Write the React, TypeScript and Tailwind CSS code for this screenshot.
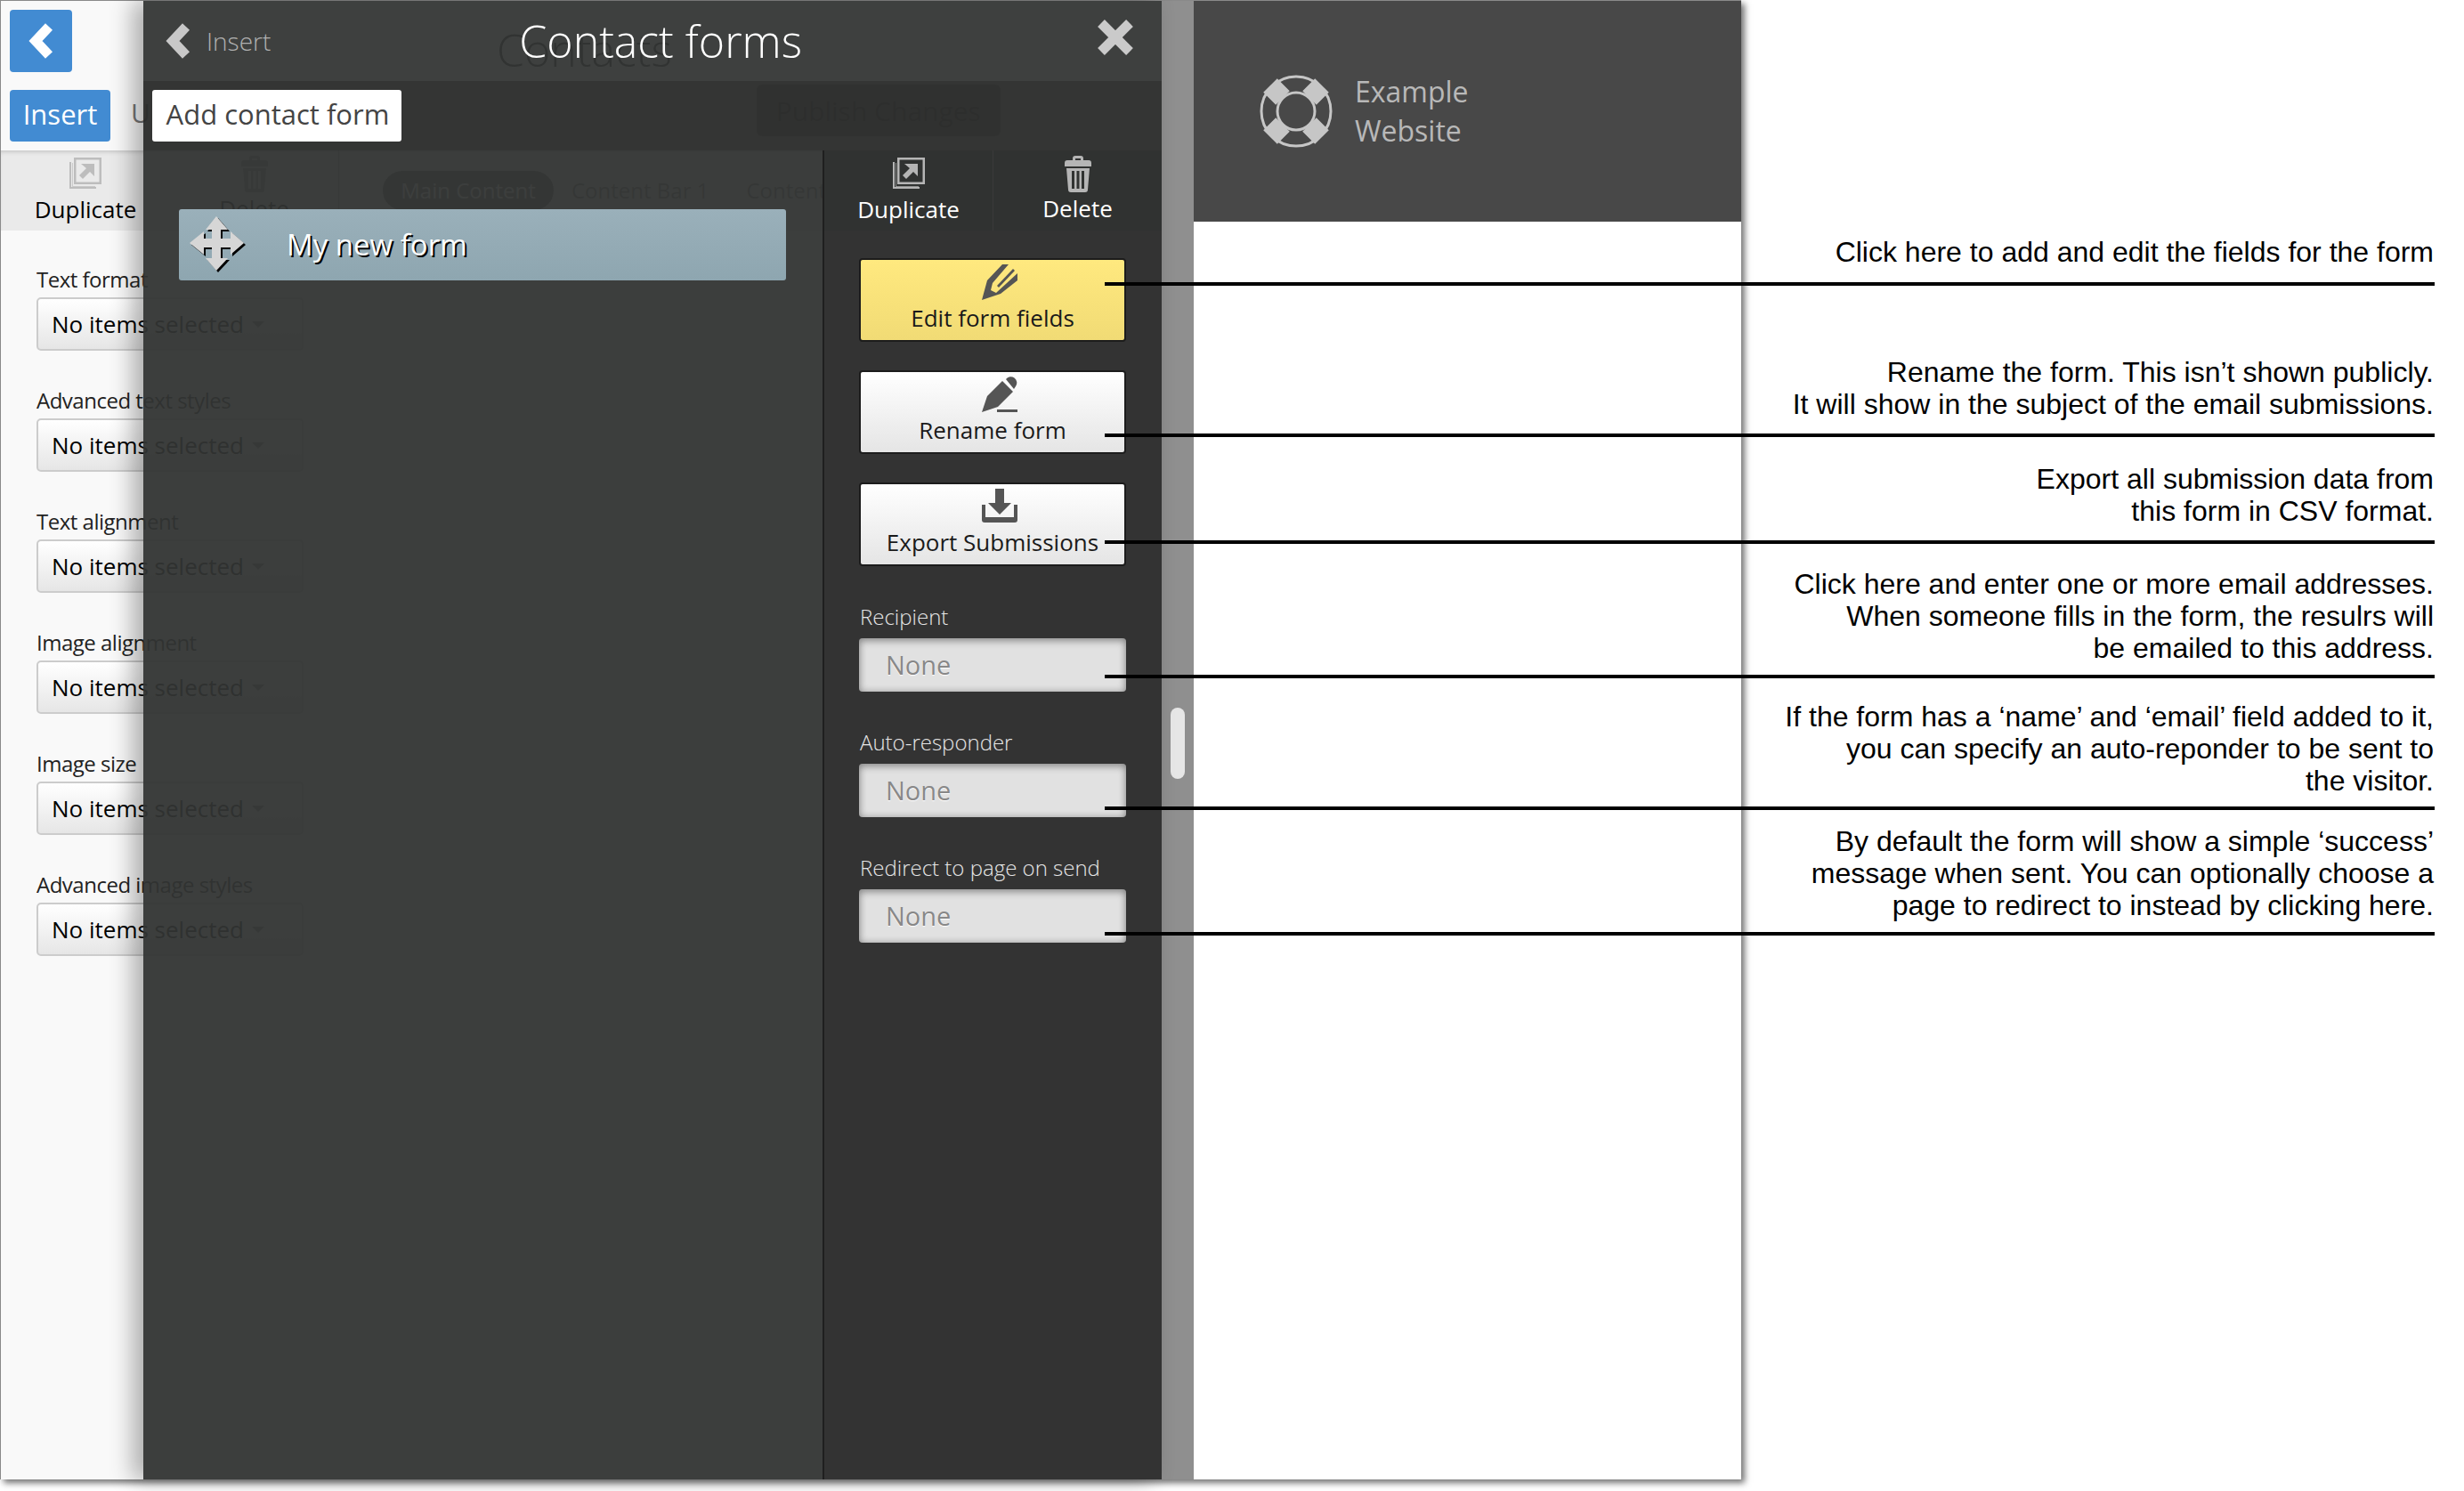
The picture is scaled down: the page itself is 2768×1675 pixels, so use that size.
const settings = [
  "Text format",
  "Advanced text styles",
  "Text alignment",
  "Image alignment",
  "Image size",
  "Advanced image styles",
];

const fields = ["Recipient", "Auto-responder", "Redirect to page on send"];

const notes = [
  {
    lines: ["Click here to add and edit the fields for the form"],
    box: "mt-[265px]",
    rule: "-bottom-[20px]",
  },
  {
    lines: [
      "Rename the form. This isn’t shown publicly.",
      "It will show in the subject of the email submissions.",
    ],
    box: "mt-[99px]",
    rule: "-bottom-[19px]",
  },
  {
    lines: ["Export all submission data from", "this form in CSV format."],
    box: "mt-[48px]",
    rule: "-bottom-[19px]",
  },
  {
    lines: [
      "Click here and enter one or more email addresses.",
      "When someone fills in the form, the resulrs will",
      "be emailed to this address.",
    ],
    box: "mt-[46px]",
    rule: "-bottom-[16px]",
  },
  {
    lines: [
      "If the form has a ‘name’ and ‘email’ field added to it,",
      "you can specify an auto-reponder to be sent to",
      "the visitor.",
    ],
    box: "mt-[41px]",
    rule: "-bottom-[15px]",
  },
  {
    lines: [
      "By default the form will show a simple ‘success’",
      "message when sent. You can optionally choose a",
      "page to redirect to instead by clicking here.",
    ],
    box: "mt-[32px]",
    rule: "-bottom-[16px]",
  },
];

const Chevron = ({ className }: { className: string }) => (
  <svg viewBox="0 0 28 40" className={className} fill="none">
    <polyline points="23,4 8,20 23,36" stroke="currentColor" strokeWidth="11" />
  </svg>
);

const DuplicateIcon = ({ className }: { className: string }) => (
  <svg viewBox="0 0 36 36" className={className} fill="currentColor">
    <path d="M5 0h31v30H5zM7.500 2.500v25h26v-25z" fillRule="evenodd" />
    <path d="M0 5h2v28h28v2H0z" />
    <path d="M3 6h1v26h25v1H3z" opacity="0.7" />
    <path d="M13 7h15v14l-5-5-8 8-4-4 8-8z" />
  </svg>
);

const TrashIcon = ({ className }: { className: string }) => (
  <svg viewBox="0 0 30 41" className={className} fill="currentColor">
    <path d="M9 5V3a3 3 0 0 1 3-3h6a3 3 0 0 1 3 3v2h6a3 3 0 0 1 3 3v4H0V8a3 3 0 0 1 3-3zM12 5h6V3h-6z" fillRule="evenodd" />
    <path d="M2 14h26l-2 24a3 3 0 0 1-3 3H7a3 3 0 0 1-3-3zM8 17v20h3V17zM13.500 17v20h3V17zM19 17v20h3V17z" fillRule="evenodd" />
  </svg>
);

const NibIcon = () => (
  <svg viewBox="0 0 40 40" className="ml-4 h-10 w-10 text-[#555]" fill="currentColor">
    <path d="M0 40 6 18 23 0h7L12 21l-2 8 6 3L40 10v8L21 33z" />
    <path d="M17 24 35 5l2 2-18 19z" />
  </svg>
);

const PencilIcon = () => (
  <svg viewBox="0 0 40 40" className="ml-4 h-10 w-10 text-[#555]" fill="currentColor">
    <path d="M0 40 6 22 23 5l12 12-17 17z" />
    <path d="M27 3a6 6 0 0 1 11 8l-2 3z" />
    <path d="M17 37h23v3H17z" />
  </svg>
);

const ExportIcon = () => (
  <svg viewBox="0 0 40 40" className="ml-4 h-10 w-10 text-[#555]" fill="currentColor">
    <path d="M15 0h10v16h8L20 29 7 16h8z" />
    <path d="M0 18h4v14h32V18h4v17a3 3 0 0 1-3 3H3a3 3 0 0 1-3-3z" />
  </svg>
);

const MOVE_ARROWS =
  "M30 0 43 15H35V25H46V17L61 30 46 43V35H35V47H43L30 61 18 47H25V35H16V43L0 30 16 17V25H25V15H18Z";

const MoveIcon = () => (
  <svg viewBox="0 0 64 64" className="h-16 w-16 shrink-0">
    <path d={MOVE_ARROWS} fill="#000" transform="translate(2 2)" />
    <path d={MOVE_ARROWS} fill="#d6d6d6" />
  </svg>
);

const LifeBuoy = () => (
  <svg viewBox="0 0 82 82" className="h-[82px] w-[82px] shrink-0" fill="none" stroke="#c6c6c6">
    <circle cx="41" cy="41" r="39" strokeWidth="3" />
    <circle cx="41" cy="41" r="21" strokeWidth="3" />
    <path d="M26 26 12 12M56 26 70 12M26 56 12 70M56 56 70 70" strokeWidth="22" />
  </svg>
);

const ActionButton = ({
  label,
  icon,
  tone,
}: {
  label: string;
  icon: React.ReactNode;
  tone: string;
}) => (
  <button
    className={`-ml-px flex h-[94px] w-[300px] flex-col items-center rounded-[4px] border-2 border-[#1c1c1c] pt-[5px] text-[26px] leading-[36px] text-[#1a1a1a] ${tone}`}
  >
    {icon}
    <span className="mt-[2px]">{label}</span>
  </button>
);

const App = () => {
  return (
    <div className="flex h-[1675px] w-[2768px] overflow-hidden bg-white font-['Open_Sans',sans-serif]">
      <div className="relative isolate flex h-[1662px] w-[1956px] shrink-0 border-t border-l border-[#8a8a8a] shadow-[4px_4px_7px_rgba(0,0,0,0.55)]">
        {/* page behind the modal, it shows through faintly */}
        <div className="flex w-[1304px] shrink-0 flex-col overflow-hidden bg-[#f9f9f9]">
          <div className="flex h-[90px] shrink-0 items-start pt-[10px] pl-[10px]">
            <button className="flex h-[70px] w-[70px] items-center justify-center rounded-[4px] bg-[#428bd2] text-white">
              <Chevron className="h-[40px] w-[28px]" />
            </button>
            <span className="mt-[11px] ml-[477px] text-[50px] leading-[68px] font-light text-black">
              Contacts
            </span>
          </div>
          <div className="flex h-[78px] shrink-0 items-start pl-[10px]">
            <button className="mt-[10px] h-[58px] w-[113px] rounded-[4px] bg-[#428bd2] pb-[4px] text-[31px] font-medium text-white">
              Insert
            </button>
            <span className="mt-[13px] ml-[23px] text-[30px] text-[#777]">Update</span>
            <span className="mt-[4px] ml-[600px] flex h-[58px] w-[274px] items-center justify-center rounded-[6px] bg-[#b5b5b5] text-[30px] whitespace-nowrap text-[#777]">
              Publish Changes
            </span>
          </div>
          <div className="flex h-[90px] shrink-0 items-center bg-[#eaeaea] shadow-[inset_0_4px_4px_-2px_rgba(0,0,0,0.15)]">
            <div className="flex h-full w-[190px] flex-col items-center pt-[8px]">
              <DuplicateIcon className="h-9 w-9 text-[#bdbdbd]" />
              <span className="mt-[4px] text-[26px] leading-[36px] text-black">Duplicate</span>
            </div>
            <div className="flex h-full w-[190px] flex-col items-center border-r border-black/30 pt-[6px]">
              <TrashIcon className="h-[41px] w-[30px] text-[#999]" />
              <span className="text-[26px] leading-[36px] text-black">Delete</span>
            </div>
            <span className="ml-[49px] flex h-[44px] w-[192px] items-center justify-center rounded-full bg-[#5f5f5f] text-[24px] whitespace-nowrap text-white">
              Main Content
            </span>
            <span className="ml-[20px] text-[24px] whitespace-nowrap text-[#777]">Content Bar 1</span>
            <span className="ml-[42px] text-[24px] whitespace-nowrap text-[#777]">Content</span>
          </div>
          <div className="flex flex-col gap-[39px] pt-[38px] pl-[40px]">
            {settings.map((label) => (
              <div key={label} className="flex flex-col gap-[4px]">
                <label className="text-[24px] leading-[33px] tracking-[-0.5px] text-[#222]">
                  {label}
                </label>
                <div className="flex h-[60px] w-[300px] items-center justify-between rounded-[5px] border-2 border-[#ccc] bg-gradient-to-b from-white to-[#e6e6e6] pr-[42px] pl-[15px] text-[26px] text-black">
                  <span className="whitespace-nowrap">No items selected</span>
                  <span className="h-0 w-0 border-x-[7px] border-t-[7px] border-x-transparent border-t-[#888]" />
                </div>
              </div>
            ))}
          </div>
        </div>

        <div className="w-[36px] shrink-0 bg-[#8f8f8f]" />

        <div className="flex min-w-0 flex-1 flex-col bg-white">
          <div className="flex h-[248px] items-center gap-[25px] bg-[#484848] pl-[74px]">
            <LifeBuoy />
            <div className="text-[32px] leading-[44px] text-[#b8b8b8]">
              <div>Example</div>
              <div>Website</div>
            </div>
          </div>
        </div>

        {/* scrollbar thumb on the grey strip */}
        <div className="absolute top-[794px] left-[1314px] h-[80px] w-[16px] rounded-full bg-[#e6e6e6]" />

        {/* contact forms modal */}
        <div className="absolute top-0 bottom-0 left-[160px] flex w-[1144px] flex-col shadow-[-12px_0_24px_rgba(0,0,0,0.3)]">
          <div className="flex h-[90px] shrink-0 items-start bg-[#343635]/95">
            <Chevron className="mt-[25px] ml-[25px] h-[40px] w-[28px] text-[#c8c8c8]" />
            <span className="mt-[25px] ml-[18px] text-[28px] leading-[40px] font-light text-[#b0b0b0]">
              Insert
            </span>
            <h1 className="mt-[11px] ml-[279px] text-[50px] leading-[68px] font-light whitespace-nowrap text-white">
              Contact forms
            </h1>
            <svg viewBox="0 0 42 40" className="mt-[21px] mr-[31px] ml-auto h-10 w-[42px]" fill="none">
              <path d="M5 4 37 36M37 4 5 36" stroke="#cacaca" strokeWidth="11" />
            </svg>
          </div>
          <div className="flex h-[78px] shrink-0 items-start bg-[#292a29]/95 pt-[10px] pl-[10px]">
            <button className="h-[58px] w-[280px] rounded-[3px] bg-white pb-[4px] pl-[2px] text-[31px] font-medium whitespace-nowrap text-[#444]">
              Add contact form
            </button>
          </div>
          <div className="flex min-h-0 flex-1">
            <div className="w-[763px] shrink-0 bg-[#323433]/95 pt-[66px] pl-[40px]">
              <div className="flex h-[80px] w-[682px] items-center rounded-[3px] bg-gradient-to-b from-[#9ab0ba] to-[#8ea6b0] pl-[12px]">
                <MoveIcon />
                <span className="ml-[45px] text-[33px] font-medium text-white [text-shadow:2px_2px_0_#000]">
                  My new form
                </span>
              </div>
            </div>
            <div className="flex flex-1 flex-col border-l-2 border-[#1f1f1f] bg-[#333333]">
              <div className="flex h-[90px] shrink-0 bg-[#303231]">
                <div className="flex w-[190px] flex-col items-center border-r border-[#3a3a3a] pt-[8px]">
                  <DuplicateIcon className="h-9 w-9 text-[#b5b5b5]" />
                  <span className="mt-[4px] text-[26px] leading-[36px] text-white">Duplicate</span>
                </div>
                <div className="flex flex-1 flex-col items-center pt-[6px]">
                  <TrashIcon className="h-[41px] w-[30px] text-[#b5b5b5]" />
                  <span className="text-[26px] leading-[36px] text-white">Delete</span>
                </div>
              </div>
              <div className="flex flex-col gap-[32px] pt-[31px] pl-[40px]">
                <ActionButton
                  label="Edit form fields"
                  icon={<NibIcon />}
                  tone="bg-gradient-to-b from-[#ffe97f] to-[#f1db75]"
                />
                <ActionButton
                  label="Rename form"
                  icon={<PencilIcon />}
                  tone="bg-gradient-to-b from-white to-[#e5e5e5]"
                />
                <ActionButton
                  label="Export Submissions"
                  icon={<ExportIcon />}
                  tone="bg-gradient-to-b from-white to-[#e5e5e5]"
                />
              </div>
              <div className="flex flex-col gap-[40px] pt-[40px] pl-[40px]">
                {fields.map((label) => (
                  <div key={label} className="flex flex-col gap-[8px]">
                    <label className="text-[24px] leading-[33px] font-light text-[#e6e6e6]">
                      {label}
                    </label>
                    <div className="-ml-px flex h-[60px] w-[300px] items-center rounded-[4px] bg-[#e1e1e1] pb-[1px] pl-[30px] text-[29px] text-[#888] shadow-[inset_0_3px_8px_rgba(0,0,0,0.3),inset_0_0_8px_rgba(0,0,0,0.2)] [text-shadow:0_1px_1px_#fff]">
                      None
                    </div>
                  </div>
                ))}
              </div>
            </div>
          </div>
        </div>
      </div>

      {/* help notes, each rule runs left over the window to its control */}
      <div className="relative z-10 flex flex-1 flex-col items-end pr-[34px] font-['Liberation_Sans',Arial,sans-serif] text-[32px] leading-[36px] text-black">
        {notes.map((note) => (
          <div key={note.lines[0]} className={`relative text-right whitespace-nowrap ${note.box}`}>
            {note.lines.map((line) => (
              <div key={line}>{line}</div>
            ))}
            <div className={`absolute right-[-1px] h-1 w-[1494px] bg-black ${note.rule}`} />
          </div>
        ))}
      </div>
    </div>
  );
};

export default App;
